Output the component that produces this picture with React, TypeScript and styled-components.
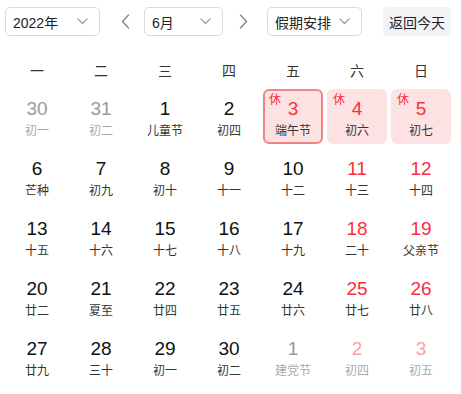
import React from "react";
import styled, { createGlobalStyle } from "styled-components";

const Global = createGlobalStyle`
  html, body { margin: 0; padding: 0; background: #fff; }
  body { font-family: "Liberation Sans", Arial, "Noto Sans CJK SC", sans-serif; }
`;

const Page = styled.div`
  width: 461px;
  height: 394px;
  box-sizing: border-box;
  padding-top: 7px;
`;

const Toolbar = styled.div`
  display: flex;
  align-items: center;
  padding-left: 5px;
  height: 29px;
`;

const Select = styled.div<{ $w: number }>`
  box-sizing: border-box;
  width: ${(p) => p.$w}px;
  height: 29px;
  border: 1px solid #d9d9de;
  border-radius: 5px;
  display: flex;
  align-items: center;
  justify-content: space-between;
  padding: 0 11px 0 7px;
  font-size: 14px;
  color: #222;
  font-family: "Liberation Sans", Arial, "Noto Sans CJK SC", sans-serif;
`;

const Arrow = styled.div<{ $ml: number; $mr: number }>`
  width: 16px;
  height: 16px;
  margin-left: ${(p) => p.$ml}px;
  margin-right: ${(p) => p.$mr}px;
  display: flex;
  align-items: center;
  justify-content: center;
`;

const TodayButton = styled.div`
  margin-left: 21px;
  box-sizing: border-box;
  width: 68px;
  height: 29px;
  border-radius: 5px;
  background: #f3f3f5;
  display: flex;
  align-items: center;
  justify-content: center;
  font-size: 14px;
  color: #222;
  font-family: "Noto Sans CJK SC", sans-serif;
`;

const Grid = styled.div`
  display: grid;
  grid-template-columns: repeat(7, 60px);
  column-gap: 4px;
  row-gap: 5px;
  padding: 0 7px;
`;

const WeekHead = styled.div`
  display: grid;
  grid-template-columns: repeat(7, 60px);
  column-gap: 4px;
  padding: 0 7px;
  margin-top: 22px;
  margin-bottom: 7px;
`;

const WeekDay = styled.div`
  height: 24px;
  line-height: 24px;
  text-align: center;
  font-size: 14px;
  color: #333;
  font-family: "Noto Sans CJK SC", sans-serif;
`;

type Tone = "normal" | "weekend" | "muted" | "mutedRed";

const Cell = styled.div<{ $rest?: boolean; $active?: boolean }>`
  position: relative;
  box-sizing: border-box;
  height: 55px;
  border-radius: 6px;
  display: flex;
  flex-direction: column;
  align-items: center;
  padding-top: ${(p) => (p.$active ? 7 : 9)}px;
  background: ${(p) => (p.$rest ? "#fde2e4" : "transparent")};
  border: ${(p) => (p.$active ? "2px solid #f08585" : "none")};
`;

const numColor: Record<Tone, string> = {
  normal: "#111",
  weekend: "#fa2f3b",
  muted: "#999",
  mutedRed: "#f8a3a3",
};

const lunarColor: Record<Tone, string> = {
  normal: "#333",
  weekend: "#333",
  muted: "#aaa",
  mutedRed: "#aaa",
};

const DayNum = styled.div<{ $tone: Tone }>`
  font-size: 19px;
  line-height: 22px;
  height: 22px;
  color: ${(p) => numColor[p.$tone]};
  font-family: "Liberation Sans", Arial, sans-serif;
`;

const Lunar = styled.div<{ $tone: Tone }>`
  margin-top: 2px;
  font-size: 12px;
  line-height: 16px;
  color: ${(p) => lunarColor[p.$tone]};
  font-family: "Noto Sans CJK SC", sans-serif;
`;

const RestTag = styled.span<{ $active?: boolean }>`
  position: absolute;
  top: ${(p) => (p.$active ? 1 : 3)}px;
  left: ${(p) => (p.$active ? 4 : 6)}px;
  font-size: 12px;
  line-height: 14px;
  color: #fa2f3b;
  font-family: "Noto Sans CJK SC", sans-serif;
`;

const Chevron = () => (
  <svg width="11" height="7" viewBox="0 0 11 7" fill="none">
    <path d="M1 1l4.5 4.5L10 1" stroke="#9a9aa0" strokeWidth="1.2" strokeLinecap="round" strokeLinejoin="round" />
  </svg>
);

const Caret = ({ dir }: { dir: "left" | "right" }) => (
  <svg width="9" height="15" viewBox="0 0 9 15" fill="none">
    <path
      d={dir === "left" ? "M7.5 1L1.5 7.5l6 6.5" : "M1.5 1l6 6.5-6 6.5"}
      stroke="#8a8a90"
      strokeWidth="1.5"
      strokeLinecap="round"
      strokeLinejoin="round"
    />
  </svg>
);

type Day = { n: number; l: string; tone: Tone; rest?: boolean; active?: boolean };

const days: Day[] = [
  { n: 30, l: "初一", tone: "muted" },
  { n: 31, l: "初二", tone: "muted" },
  { n: 1, l: "儿童节", tone: "normal" },
  { n: 2, l: "初四", tone: "normal" },
  { n: 3, l: "端午节", tone: "weekend", rest: true, active: true },
  { n: 4, l: "初六", tone: "weekend", rest: true },
  { n: 5, l: "初七", tone: "weekend", rest: true },
  { n: 6, l: "芒种", tone: "normal" },
  { n: 7, l: "初九", tone: "normal" },
  { n: 8, l: "初十", tone: "normal" },
  { n: 9, l: "十一", tone: "normal" },
  { n: 10, l: "十二", tone: "normal" },
  { n: 11, l: "十三", tone: "weekend" },
  { n: 12, l: "十四", tone: "weekend" },
  { n: 13, l: "十五", tone: "normal" },
  { n: 14, l: "十六", tone: "normal" },
  { n: 15, l: "十七", tone: "normal" },
  { n: 16, l: "十八", tone: "normal" },
  { n: 17, l: "十九", tone: "normal" },
  { n: 18, l: "二十", tone: "weekend" },
  { n: 19, l: "父亲节", tone: "weekend" },
  { n: 20, l: "廿二", tone: "normal" },
  { n: 21, l: "夏至", tone: "normal" },
  { n: 22, l: "廿四", tone: "normal" },
  { n: 23, l: "廿五", tone: "normal" },
  { n: 24, l: "廿六", tone: "normal" },
  { n: 25, l: "廿七", tone: "weekend" },
  { n: 26, l: "廿八", tone: "weekend" },
  { n: 27, l: "廿九", tone: "normal" },
  { n: 28, l: "三十", tone: "normal" },
  { n: 29, l: "初一", tone: "normal" },
  { n: 30, l: "初二", tone: "normal" },
  { n: 1, l: "建党节", tone: "muted" },
  { n: 2, l: "初四", tone: "mutedRed" },
  { n: 3, l: "初五", tone: "mutedRed" },
];

const weekNames = ["一", "二", "三", "四", "五", "六", "日"];

export default function App() {
  return (
    <Page>
      <Global />
      <Toolbar>
        <Select $w={95}>
          <span>2022年</span>
          <Chevron />
        </Select>
        <Arrow $ml={17} $mr={11}>
          <Caret dir="left" />
        </Arrow>
        <Select $w={79}>
          <span>6月</span>
          <Chevron />
        </Select>
        <Arrow $ml={12} $mr={16}>
          <Caret dir="right" />
        </Arrow>
        <Select $w={95}>
          <span>假期安排</span>
          <Chevron />
        </Select>
        <TodayButton>返回今天</TodayButton>
      </Toolbar>
      <WeekHead>
        {weekNames.map((w) => (
          <WeekDay key={w}>{w}</WeekDay>
        ))}
      </WeekHead>
      <Grid>
        {days.map((d, i) => (
          <Cell key={i} $rest={d.rest} $active={d.active}>
            {d.rest && <RestTag $active={d.active}>休</RestTag>}
            <DayNum $tone={d.tone}>{d.n}</DayNum>
            <Lunar $tone={d.tone}>{d.l}</Lunar>
          </Cell>
        ))}
      </Grid>
    </Page>
  );
}
